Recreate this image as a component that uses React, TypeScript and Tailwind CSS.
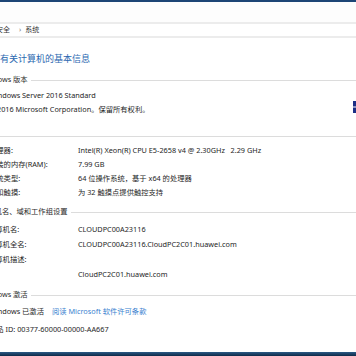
const font = { fontFamily: '"Noto Sans", "Noto Sans CJK SC", sans-serif' };

function SectionHeader({ title }: { title: string }) {
  return (
    <div className="flex items-center h-[12px] leading-[12px] text-[7.3px] text-[#2b2b2b]">
      <span className="shrink-0">{title}</span>
      <div className="ml-[3px] mt-[2px] h-px flex-1 bg-[#dcdcdc]" />
    </div>
  );
}

function Row({ label, value }: { label: string; value?: string }) {
  return (
    <div className="flex h-[14px] leading-[14px] pl-[9px] whitespace-pre">
      <span className="w-[89px] shrink-0">{label}</span>
      <span>{value}</span>
    </div>
  );
}

function NameRow({ label, value }: { label: string; value?: string }) {
  return (
    <div className="flex h-[15px] leading-[15px] pl-[8px]">
      <span className="w-[90px] shrink-0">{label}</span>
      <span>{value}</span>
    </div>
  );
}

export default function App() {
  return (
    <div
      className="w-[356px] h-[356px] overflow-hidden bg-white flex flex-col text-[#1e1e1e] text-[7.3px]"
      style={font}
    >
      {/* window top */}
      <div className="h-[2px] bg-[#1d4576] shrink-0" />
      <div className="h-[20px] bg-[#fdfdfd] shrink-0" />
      <div className="h-[2px] bg-[#ececec] shrink-0" />
      <div className="h-[12px] flex items-center -ml-[25px] text-[7px] text-[#333] shrink-0">
        <span>系统和安全</span>
        <span className="ml-[9px] mr-[4px] text-[#777]">›</span>
        <span>系统</span>
      </div>
      <div className="h-[2px] bg-[#ececec] shrink-0" />

      {/* content */}
      <div className="-ml-[20px] w-[376px] flex-1 flex flex-col">
        <div className="mt-[14px] h-[14px] leading-[14px] pl-[2px] text-[9px] text-[#2a68b0]">
          查看有关计算机的基本信息
        </div>

        <div className="mt-[7px]">
          <SectionHeader title="Windows 版本" />
        </div>
        <div className="mt-[3px] flex justify-between">
          <div className="pl-[9px]">
            <div className="h-[14px] leading-[14px]">Windows Server 2016 Standard</div>
            <div className="h-[14px] leading-[14px]">© 2016 Microsoft Corporation。保留所有权利。</div>
          </div>
          <svg className="shrink-0 mt-[13px] -mr-[27px]" width="30" height="12" viewBox="0 0 30 12">
            <rect x="0" y="0" width="30" height="5.5" fill="#1c2f86" />
            <rect x="0" y="6.5" width="30" height="5.5" fill="#1c2f86" />
          </svg>
        </div>

        <div className="mt-[13px]">
          <SectionHeader title="系统" />
        </div>
        <div className="mt-[2px]">
          <Row label="处理器:" value="Intel(R) Xeon(R) CPU E5-2658 v4 @ 2.30GHz   2.29 GHz" />
          <Row label="安装的内存(RAM):" value="7.99 GB" />
          <Row label="系统类型:" value="64 位操作系统，基于 x64 的处理器" />
          <Row label="笔和触摸:" value="为 32 触摸点提供触控支持" />
        </div>

        <div className="mt-[6px]">
          <SectionHeader title="计算机名、域和工作组设置" />
        </div>
        <div className="mt-[5px]">
          <NameRow label="计算机名:" value="CLOUDPC00A23116" />
          <NameRow label="计算机全名:" value="CLOUDPC00A23116.CloudPC2C01.huawei.com" />
          <NameRow label="计算机描述:" />
          <NameRow label="域:" value="CloudPC2C01.huawei.com" />
        </div>

        <div className="mt-[6px]">
          <SectionHeader title="Windows 激活" />
        </div>
        <div className="mt-[4px] pl-[9px] h-[14px] leading-[14px] flex">
          <span>Windows 已激活</span>
          <span className="ml-[8px] text-[#3a82cf]">阅读 Microsoft 软件许可条款</span>
        </div>
        <div className="mt-[4px] pl-[9px] h-[14px] leading-[14px]">
          产品 ID: 00377-60000-00000-AA667
        </div>
      </div>

      {/* taskbar */}
      <div className="h-[4px] shrink-0 bg-gradient-to-b from-[#2b5a86] to-[#0e2a48]" />
    </div>
  );
}
